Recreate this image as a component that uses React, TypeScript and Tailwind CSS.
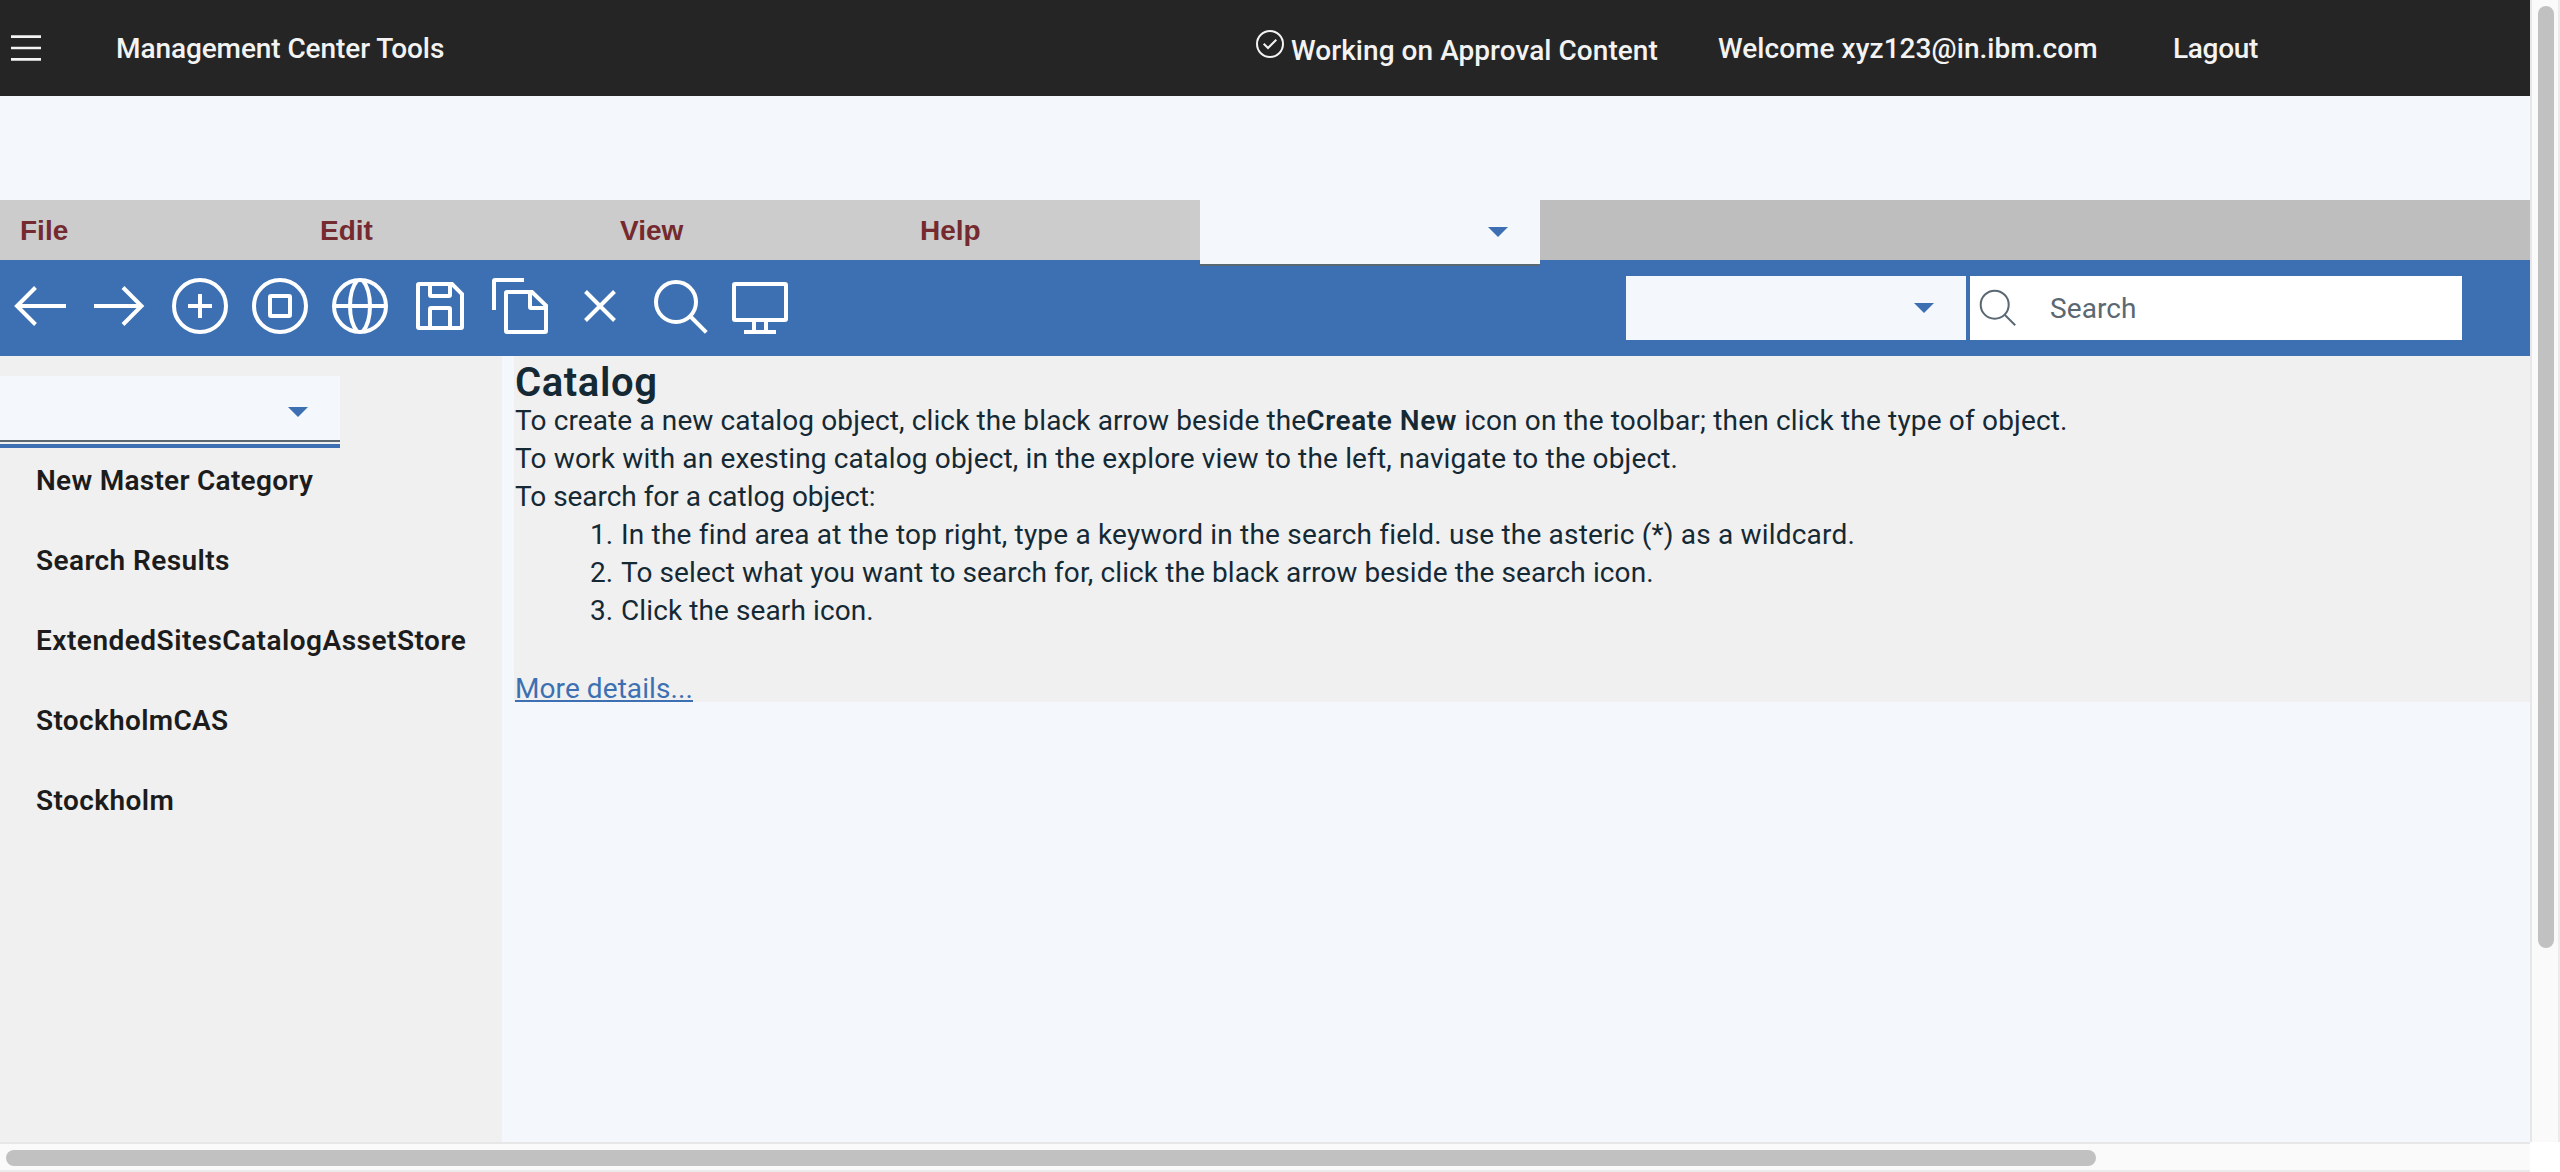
import type { ReactNode } from 'react';

function Caret() {
  return (
    <svg width="20" height="10" viewBox="0 0 20 10" className="shrink-0 fill-[#3d70b2]">
      <path d="M0 0H20L10 10Z" />
    </svg>
  );
}

function Tool({ label, children }: { label: string; children: ReactNode }) {
  return (
    <button aria-label={label} className="size-20 shrink-0">
      <svg width="80" height="80" viewBox="0 0 80 80" fill="none" stroke="#fff" strokeWidth="4">
        {children}
      </svg>
    </button>
  );
}

function Toolbar() {
  return (
    <div className="flex h-[96px] items-start bg-[#3d70b2]">
      <div className="flex w-[1626px] pt-[6px]">
        <Tool label="Back">
          <path d="M66 40H17M35.5 21.5L17 40L35.5 58.5" />
        </Tool>
        <Tool label="Forward">
          <path d="M14 40H61M43 21.5L61.5 40L43 58.5" />
        </Tool>
        <Tool label="Create new">
          <circle cx="40" cy="40" r="26" />
          <path d="M28 40H52M40 28V52" />
        </Tool>
        <Tool label="Stop">
          <circle cx="40" cy="40" r="26" />
          <rect x="30" y="30" width="20" height="20" rx="1" />
        </Tool>
        <Tool label="Web">
          <circle cx="40" cy="40" r="26" />
          <path d="M14 40H66M37.5 14C27.5 26 27.5 54 37.5 66M42.5 14C52.5 26 52.5 54 42.5 66" />
        </Tool>
        <Tool label="Save">
          <path d="M19 18H52L62 28V61A1 1 0 0 1 61 62H19A1 1 0 0 1 18 61V19A1 1 0 0 1 19 18Z" />
          <path d="M30 18V29A1 1 0 0 0 31 30H49A1 1 0 0 0 50 29V18" />
          <path d="M30 62V43A1 1 0 0 1 31 42H49A1 1 0 0 1 50 43V62" />
        </Tool>
        <Tool label="Copy">
          <path d="M14 44V15A1 1 0 0 1 15 14H44" />
          <path d="M27 26H52L66 39.5V65A1 1 0 0 1 65 66H27A1 1 0 0 1 26 65V27A1 1 0 0 1 27 26Z" />
          <path d="M50 26V41A1 1 0 0 0 51 42H66" />
        </Tool>
        <Tool label="Close">
          <path d="M25.5 25.5L54.5 54.5M54.5 25.5L25.5 54.5" />
        </Tool>
        <Tool label="Find">
          <circle cx="36" cy="36" r="20" />
          <path d="M50.5 50.5L66.3 66.3" />
        </Tool>
        <Tool label="Preview">
          <rect x="14" y="18" width="52" height="36" rx="1" />
          <path d="M34 54V66M46 54V66M24 66H56" />
        </Tool>
      </div>
      <div className="mt-4 mr-1 flex h-16 w-[340px] justify-end bg-[#f4f7fb] pt-[27px] pr-8">
        <Caret />
      </div>
      <div className="mt-4 flex h-16 w-[492px] bg-white text-[#5a6872]">
        <svg width="80" height="64" viewBox="0 0 80 64" fill="none" stroke="currentColor" strokeWidth="2">
          <circle cx="24.7" cy="28.7" r="14" />
          <path d="M34.7 38.7L45.2 49.2" />
        </svg>
        <span className="leading-[65px] tracking-[0.1px]">Search</span>
      </div>
    </div>
  );
}

const menus = ['File', 'Edit', 'View', 'Help'];

const explorer = [
  { name: 'New Master Category', tracking: 'tracking-[0.28px]' },
  { name: 'Search Results', tracking: 'tracking-[0.4px]' },
  { name: 'ExtendedSitesCatalogAssetStore', tracking: 'tracking-[0.49px]' },
  { name: 'StockholmCAS', tracking: 'tracking-[0.33px]' },
  { name: 'Stockholm', tracking: 'tracking-[0.42px]' },
];

export default function App() {
  return (
    <div className="flex h-[1172px] w-[2560px] flex-col overflow-hidden bg-white font-['Roboto',sans-serif] text-[28px] whitespace-nowrap text-[#152935]">
      <div className="flex h-[1142px]">
        <div className="flex w-[2530px] flex-col bg-[#f4f7fb]">
          <header className="flex h-[96px] items-start bg-[#252525] pt-[30px] leading-[37px] font-medium text-[#f3f3f3]">
            <button aria-label="Menu" className="w-[116px] pt-[5px] pl-[11px]">
              <svg width="30" height="26" viewBox="0 0 30 26" fill="#f3f3f3">
                <path d="M0 .25H30V2.9H0ZM0 11.7H30V14.3H0ZM0 23.1H30V25.75H0Z" />
              </svg>
            </button>
            <span className="w-[1138px] tracking-[-0.09px]">Management Center Tools</span>
            <div className="flex w-[464px] gap-[5px]">
              <svg width="32" height="32" viewBox="0 0 32 32" className="-mt-[2px]" fill="none" stroke="#f3f3f3" strokeWidth="2">
                <circle cx="16" cy="16" r="13" />
                <path d="M9.7 15.7L14 20L22.3 11.7" />
              </svg>
              <span className="mt-[2px] tracking-[0.05px]">Working on Approval Content</span>
            </div>
            <span className="w-[455px] tracking-[0.05px]">Welcome xyz123@in.ibm.com</span>
            <span className="tracking-[-0.3px]">Lagout</span>
          </header>

          <nav className="mt-[104px] flex h-[60px] bg-[#bebebe] font-['Liberation_Sans',sans-serif] leading-[61px] font-bold text-[#742a2f]">
            {menus.map((m) => (
              <span key={m} className="h-[60px] w-[300px] bg-[#cccccc] pl-5">
                {m}
              </span>
            ))}
            <div className="relative z-10 flex h-[66px] w-[340px] justify-end border-b-2 border-[#5a6872] bg-[#f4f7fb] pt-[27px] pr-8">
              <Caret />
            </div>
          </nav>

          <Toolbar />

          <div className="flex grow">
            <aside className="w-[502px] bg-[#f0f0f0] pt-5">
              <div className="flex h-[66px] w-[340px] justify-end border-b-2 border-[#5a6872] bg-[#f4f7fb] pt-[31px] pr-8">
                <Caret />
              </div>
              <div className="mt-[2px] h-1 w-[340px] bg-[#3d70b2]" />
              <ul className="flex flex-col gap-[43px] pt-[14px] pl-[36px] leading-[37px] font-semibold text-[#1c1c1c]">
                {explorer.map((e) => (
                  <li key={e.name} className={e.tracking}>
                    {e.name}
                  </li>
                ))}
              </ul>
            </aside>

            <main className="ml-3 h-[346px] w-[2016px] bg-[#f0f0f0] pl-px leading-[38px]">
              <h1 className="h-[46px] text-[40px] leading-[53px] font-semibold tracking-[0.6px]">Catalog</h1>
              <p className="tracking-[0.12px]">
                To create a new catalog object, click the black arrow beside the
                <strong className="font-semibold tracking-[0.55px]">Create New</strong>
                <span className="tracking-[0.17px]"> icon on the toolbar; then click the type of object.</span>
              </p>
              <p className="tracking-[0.16px]">
                To work with an exesting catalog object, in the explore view to the left, navigate to the object.
              </p>
              <p className="tracking-[-0.04px]">To search for a catlog object:</p>
              <ol>
                <li className="flex pl-[75px]">
                  <span className="w-[31px]">1.</span>
                  <span className="tracking-[0.19px]">
                    In the find area at the top right, type a keyword in the search field. use the asteric (*) as a wildcard.
                  </span>
                </li>
                <li className="flex pl-[75px]">
                  <span className="w-[31px]">2.</span>
                  <span className="tracking-[0.1px]">
                    To select what you want to search for, click the black arrow beside the search icon.
                  </span>
                </li>
                <li className="flex pl-[75px]">
                  <span className="w-[31px]">3.</span>
                  <span className="tracking-[0.1px]">Click the searh icon.</span>
                </li>
              </ol>
              <div className="mt-10 flex">
                <a className="h-[32px] border-b-2 border-[#3d70b2] tracking-[0.08px] text-[#3d70b2]">More details...</a>
              </div>
            </main>
          </div>
        </div>

        <div className="w-[30px] border-x-2 border-l-[#e7e7ea] border-r-[#ebebeb] bg-[#fafafa] pt-[6px] pl-[6px]">
          <div className="h-[942px] w-4 rounded-full bg-[#c1c1c1]" />
        </div>
      </div>
      <div className="h-[30px] w-[2530px] border-y-2 border-t-[#e7e7e7] border-b-[#ebebeb] bg-[#fafafa] pt-[6px] pl-[6px]">
        <div className="h-4 w-[2090px] rounded-full bg-[#c1c1c1]" />
      </div>
    </div>
  );
}
